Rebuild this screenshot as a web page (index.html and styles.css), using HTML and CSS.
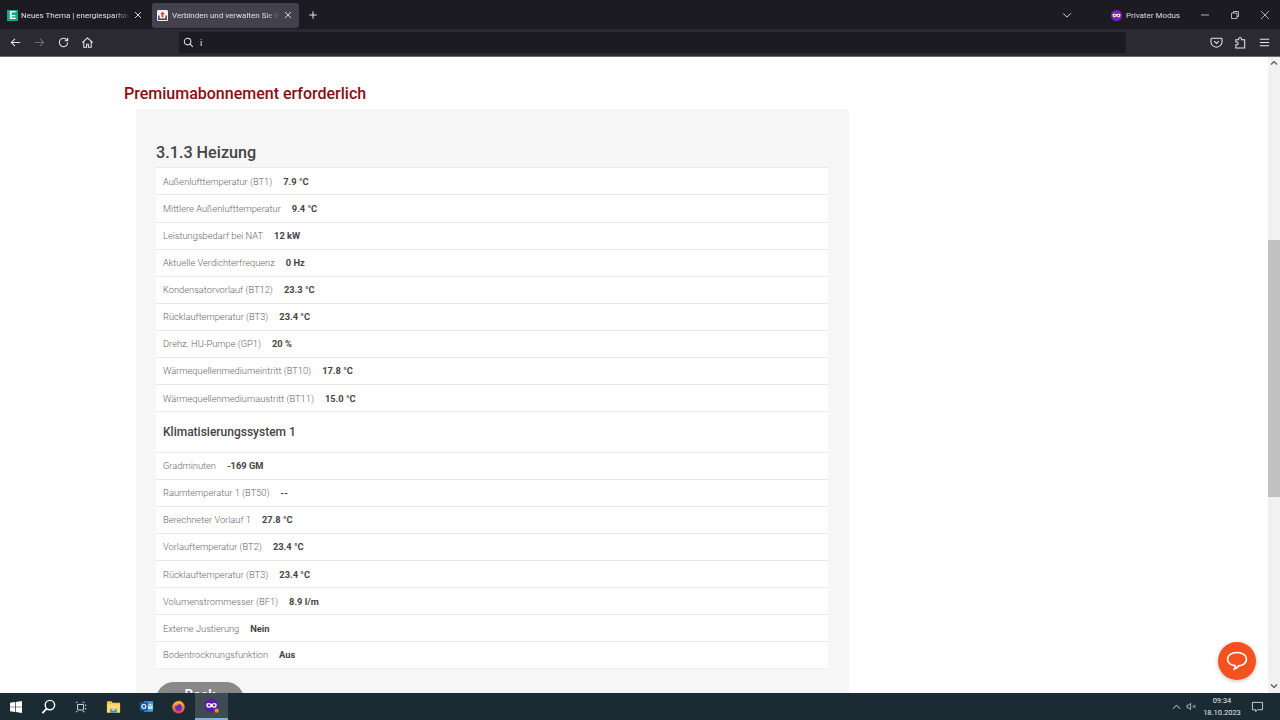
FILE: index.html
```html
<!DOCTYPE html>
<html lang="de">
<head>
<meta charset="utf-8">
<title>Verbinden und verwalten Sie Ihre Anlage</title>
<link rel="stylesheet" href="styles.css">
</head>
<body>
<div class="window">
  <header class="tabbar">
    <div class="tab">
      <span class="favicon fav-e">E</span>
      <span class="tab-title">Neues Thema | energiesparhaus.at</span>
      <svg class="tab-x" viewBox="0 0 10 10"><path d="M2 2l6 6M8 2l-6 6"/></svg>
    </div>
    <div class="tab tab-active">
      <svg class="favicon" viewBox="0 0 12 12"><rect width="12" height="12" rx="1.500" fill="#f4f1f1"/><path d="M2 6v4h8V6" fill="none" stroke="#3a3f6a" stroke-width="1.600"/><path d="M6 1.500L3.500 4.500h1.500V8h2V4.500h1.500z" fill="#d9402e"/></svg>
      <span class="tab-title">Verbinden und verwalten Sie Ihre</span>
      <svg class="tab-x" viewBox="0 0 10 10"><path d="M2 2l6 6M8 2l-6 6"/></svg>
    </div>
    <svg class="new-tab" viewBox="0 0 12 12"><path d="M6 1.500v9M1.500 6h9"/></svg>
    <div class="tabbar-right">
      <svg class="chev" viewBox="0 0 12 8"><path d="M1.500 1.500L6 6l4.500-4.500"/></svg>
      <div class="private">
        <svg class="mask" viewBox="0 0 12 12"><circle cx="6" cy="6" r="6" fill="#7a1fc4"/><path d="M1.800 4.500c1.300-.8 2.800-.6 4.200.2 1.400-.8 2.900-1 4.200-.2.400 2-.4 3.500-2 3.500-1 0-1.600-.8-2.200-.8S4.800 8 3.800 8c-1.600 0-2.400-1.500-2-3.500z" fill="#f1e6fb"/><circle cx="4" cy="6" r=".9" fill="#7a1fc4"/><circle cx="8" cy="6" r=".9" fill="#7a1fc4"/></svg>
        <span>Privater Modus</span>
      </div>
      <div class="win-controls">
        <svg viewBox="0 0 10 10"><path d="M1 5h8"/></svg>
        <svg viewBox="0 0 10 10"><path d="M1.500 3h5.500v5.500H1.500zM3.500 3V1.500h5v5H7"/></svg>
        <svg viewBox="0 0 10 10"><path d="M1 1l8 8M9 1l-8 8"/></svg>
      </div>
    </div>
  </header>

  <nav class="toolbar">
    <div class="nav-buttons">
      <svg class="tool" viewBox="0 0 14 14"><path d="M12 7H2.500M6.500 3L2.500 7l4 4"/></svg>
      <svg class="tool tool-off" viewBox="0 0 14 14"><path d="M2 7h9.500M7.500 3l4 4-4 4"/></svg>
      <svg class="tool" viewBox="0 0 14 14"><path d="M11.500 7a4.500 4.500 0 1 1-1.300-3.200L11.500 5M11.500 1.800V5H8.300"/></svg>
      <svg class="tool" viewBox="0 0 14 14"><path d="M1.500 7L7 2l5.500 5M3 6v6h3V9h2v3h3V6"/></svg>
    </div>
    <div class="urlbar">
      <svg class="url-search" viewBox="0 0 12 12"><circle cx="5" cy="5" r="3.600"/><path d="M7.700 7.700l3 3"/></svg>
      <span>i</span>
    </div>
    <div class="tool-right">
      <svg class="tool" viewBox="0 0 14 14"><path d="M2 2.500h10a1 1 0 0 1 1 1V6a6 6 0 0 1-12 0V3.500a1 1 0 0 1 1-1z"/><path d="M4.500 5.500L7 8l2.500-2.500"/></svg>
      <svg class="tool" viewBox="0 0 14 14"><path d="M5 4V3a1.500 1.500 0 0 1 3 0v1h3.500v9H2V9.500h1a1.500 1.500 0 0 0 0-3H2V4z"/></svg>
      <svg class="tool" viewBox="0 0 14 14"><path d="M2 3.500h10M2 7h10M2 10.500h10"/></svg>
    </div>
  </nav>

  <main class="viewport">
    <div class="page">
      <h2 class="notice">Premiumabonnement erforderlich</h2>
      <section class="panel">
        <h3 class="panel-title">3.1.3 Heizung</h3>
        <ul class="list">
          <li class="row"><span>Außenlufttemperatur (BT1)</span><b>7.9 °C</b></li>
          <li class="row"><span>Mittlere Außenlufttemperatur</span><b>9.4 °C</b></li>
          <li class="row"><span>Leistungsbedarf bei NAT</span><b>12 kW</b></li>
          <li class="row"><span>Aktuelle Verdichterfrequenz</span><b>0 Hz</b></li>
          <li class="row"><span>Kondensatorvorlauf (BT12)</span><b>23.3 °C</b></li>
          <li class="row"><span>Rücklauftemperatur (BT3)</span><b>23.4 °C</b></li>
          <li class="row"><span>Drehz. HU-Pumpe (GP1)</span><b>20 %</b></li>
          <li class="row"><span>Wärmequellenmediumeintritt (BT10)</span><b>17.8 °C</b></li>
          <li class="row"><span>Wärmequellenmediumaustritt (BT11)</span><b>15.0 °C</b></li>
          <li class="row row-head">Klimatisierungssystem 1</li>
          <li class="row"><span>Gradminuten</span><b>-169 GM</b></li>
          <li class="row"><span>Raumtemperatur 1 (BT50)</span><b>--</b></li>
          <li class="row"><span>Berechneter Vorlauf 1</span><b>27.8 °C</b></li>
          <li class="row"><span>Vorlauftemperatur (BT2)</span><b>23.4 °C</b></li>
          <li class="row"><span>Rücklauftemperatur (BT3)</span><b>23.4 °C</b></li>
          <li class="row"><span>Volumenstrommesser (BF1)</span><b>8.9 l/m</b></li>
          <li class="row"><span>Externe Justierung</span><b>Nein</b></li>
          <li class="row"><span>Bodentrocknungsfunktion</span><b>Aus</b></li>
        </ul>
        <button class="back">Back</button>
      </section>
    </div>
    <div class="scrollbar">
      <svg class="arrow" viewBox="0 0 8 6"><path d="M1 4.500L4 1.500l3 3"/></svg>
      <div class="track"><div class="thumb"></div></div>
      <svg class="arrow" viewBox="0 0 8 6"><path d="M1 1.500l3 3 3-3"/></svg>
    </div>
    <button class="chat" aria-label="Chat">
      <svg viewBox="0 0 24 24"><path d="M12 3.500c5.500 0 9.500 2.900 9.500 6.700s-3.600 6.500-7.700 6.700c-1.300 1.400-2.500 2.300-4.300 3 .5-1.100.7-2.100.6-3.200-3.800-.6-7.600-3-7.600-6.500 0-3.800 4-6.700 9.500-6.700z"/></svg>
    </button>
  </main>

  <footer class="taskbar">
    <div class="task-left">
      <span class="task-slot task-start"><svg class="ico-16" viewBox="0 0 12 12"><path fill="#fff" d="M0 1.700l5-.7v4.700H0zM5.700.9L12 0v5.700H5.700zM0 6.300h5V11l-5-.7zM5.700 6.300H12V12l-6.300-.9z"/></svg></span>
      <span class="task-slot"><svg class="ico-18" viewBox="0 0 16 16"><circle cx="9.500" cy="6.500" r="5" fill="none" stroke="#fff" stroke-width="1.500"/><path d="M6 10.200L1.500 15" stroke="#fff" stroke-width="1.800"/></svg></span>
      <span class="task-slot"><svg class="ico-16" viewBox="0 0 14 14"><path d="M1 1.500h2M9 1.500h2M3 4h7v6.500H3zM1 12.500h2M9 12.500h2M12.500 4v2M12.500 8v2" fill="none" stroke="#dfe3e6" stroke-width="1.100"/></svg></span>
      <span class="task-slot"><svg class="ico-18" viewBox="0 0 16 16"><path d="M1 2.500h5l1.200 1.500H15v10.500H1z" fill="#f3c63f"/><path d="M1 5.500h14v9H1z" fill="#fbd96b"/><path d="M4.500 10.500h7v4h-7z" fill="#3b87c4"/><path d="M6 10.500h4v2H6z" fill="#a9d3ee"/></svg></span>
      <span class="task-slot"><svg class="ico-18" viewBox="0 0 16 16"><rect x="5" y="2.500" width="10" height="11" rx="1" fill="#3ca0e3"/><path d="M9 5.500h5.500v5H9z" fill="#d7ecfa"/><path d="M9 5.500l2.800 2.500 2.700-2.500" fill="none" stroke="#1b6fb5" stroke-width=".8"/><rect x="1" y="3.500" width="8.500" height="9" rx="1" fill="#0f5fa8"/><circle cx="5.200" cy="8" r="2.100" fill="none" stroke="#fff" stroke-width="1.200"/></svg></span>
      <span class="task-slot"><svg class="ico-18" viewBox="0 0 16 16"><defs><linearGradient id="fx" x1="0" y1="0" x2="0" y2="1"><stop offset="0" stop-color="#ffbd33"/><stop offset="1" stop-color="#e8384f"/></linearGradient></defs><circle cx="8" cy="8.800" r="6.600" fill="url(#fx)"/><path d="M8.500 1c2.800 1.500 4.500 3.500 5 6.500L11 5z" fill="#ffa42e"/><circle cx="8" cy="9" r="3.600" fill="#5b2dbb"/><path d="M4 7.500c1-2 3-2.700 4.500-2.200L7 7z" fill="#ff8a2e"/></svg></span>
      <span class="task-slot task-current"><svg class="ico-18" viewBox="0 0 16 16"><circle cx="8" cy="8" r="7.500" fill="#5c1d9c"/><path d="M2.500 6c1.800-1.200 3.800-.8 5.500.4C9.700 5.200 11.700 4.800 13.500 6c.4 2.700-.6 4.500-2.600 4.500-1.300 0-2.100-1-2.900-1s-1.600 1-2.900 1C3.100 10.500 2.100 8.700 2.500 6z" fill="#f1e6fb"/><circle cx="5.300" cy="7.800" r="1.200" fill="#5c1d9c"/><circle cx="10.700" cy="7.800" r="1.200" fill="#5c1d9c"/><circle cx="13.500" cy="13.500" r="2.300" fill="#f08a2c"/></svg></span>
    </div>
    <div class="task-right">
      <svg class="tray-chev" viewBox="0 0 10 6"><path d="M1 5l4-4 4 4"/></svg>
      <svg class="tray-sound" viewBox="0 0 12 10"><path d="M1 3.500h1.800L5 1.500v7L2.800 6.500H1zM7.500 3.500l3 3M10.500 3.500l-3 3"/></svg>
      <div class="clock"><span>09:34</span><span>18.10.2023</span></div>
      <svg class="tray-note" viewBox="0 0 14 13"><path d="M1.500 1.500h11v8H7l-2 2v-2H1.500z"/></svg>
    </div>
  </footer>
</div>
</body>
</html>
```
FILE: styles.css
```css
* { box-sizing: border-box; }
html, body { margin: 0; height: 100%; overflow: hidden; }
body { font-family: Roboto, "Liberation Sans", sans-serif; }
svg { display: block; flex: none; }

.window { width: 1280px; height: 720px; display: flex; flex-direction: column; background: #fff; }

/* Tab strip */
.tabbar {
  height: 29px; flex: none; display: flex; align-items: center;
  background: #1c1b22; color: #e0e0e4; padding: 1px 0 0 1px; font-size: 8px;
}
.tab {
  width: 147px; height: 25px; margin-right: 4px; display: flex; align-items: center;
  padding: 0 6px 0 5px; border-radius: 3px;
}
.tab:first-child { padding: 0 5px 0 6px; }
.tab:first-child .favicon { margin-right: 3px; }
.tab-active { background: #42414d; }
.favicon { width: 11px; height: 11px; flex: none; margin-right: 4px; }
.fav-e {
  background: #17a58a; color: #fff; font: 700 10px/11px "Liberation Sans", sans-serif; text-align: center;
}
.tab-title {
  flex: 1; min-width: 0; white-space: nowrap; overflow: hidden;
  -webkit-mask-image: linear-gradient(90deg, #000 86%, transparent);
  mask-image: linear-gradient(90deg, #000 86%, transparent);
}
.tab-x { width: 10px; height: 10px; margin-left: 3px; fill: none; stroke: #d5d5da; stroke-width: 1; }
.new-tab { width: 10px; height: 10px; margin-left: 5px; fill: none; stroke: #e8e8ea; stroke-width: 1.200; }
.tabbar-right { margin-left: auto; display: flex; align-items: center; }
.chev { width: 10px; height: 7px; margin-right: 39px; fill: none; stroke: #d5d5da; stroke-width: 1.200; }
.private { display: flex; align-items: center; gap: 4px; color: #d8d8dc; font-size: 8px; margin-right: 20px; }
.mask { width: 11px; height: 11px; }
.win-controls { display: flex; align-items: center; gap: 20px; padding-right: 10px; }
.win-controls svg { width: 10px; height: 10px; fill: none; stroke: #d5d5da; stroke-width: .8; }

/* Toolbar */
.toolbar {
  height: 28px; flex: none; display: flex; align-items: center;
  background: #2b2a33; border-bottom: 1px solid #6a6a70; padding: 0 9px;
}
.tool { width: 13px; height: 13px; fill: none; stroke: #e6e6ea; stroke-width: 1.100; }
.tool-off { stroke: #6c6b73; }
.nav-buttons { display: flex; gap: 11px; }
.urlbar {
  width: 947px; height: 21px; margin-left: 85px; background: #1c1b22; border-radius: 2px;
  display: flex; align-items: center; padding-left: 4px; color: #e8e8ea; font-size: 9px; gap: 6px;
}
.url-search { width: 11px; height: 11px; fill: none; stroke: #e6e6ea; stroke-width: 1.100; }
.tool-right { margin-left: auto; display: flex; gap: 11px; }

/* Page */
.viewport { flex: 1; min-height: 0; display: flex; position: relative; overflow: hidden; background: #fff; }
.page { flex: 1; min-width: 0; padding: 27px 0 0 124px; }
.notice { margin: 0 0 6px; color: #8b0d14; font-size: 16px; line-height: 19px; font-weight: 500; }
.panel { width: 713px; margin-left: 12px; background: #f6f6f6; padding: 33px 21px 0 20px; }
.panel-title { margin: 0 0 3.400px; color: #444; font-size: 16.200px; line-height: 22px; font-weight: 500; }
.list { list-style: none; margin: 0; padding: 0; background: #fff; border-radius: 3px; }
.row {
  height: 27.090px; display: flex; align-items: center; gap: 11px; padding: 0 7px;
  border-top: 1px solid #e9e9e9; font-size: 9.300px; color: #666; font-weight: 300;
}
.row:last-child { border-bottom: 1px solid #eeeeee; height: 27.400px; }
.row b { font-weight: 700; color: #444; font-size: 9.300px; }
.row-head { height: 40.600px; font-size: 12px; font-weight: 500; color: #444; }
.back {
  display: block; width: 88px; height: 36px; margin: 13.200px 0 0; padding: 0 0 10px; border: 0; border-radius: 18px;
  background: #888; color: #fff; font: 500 14px Roboto, sans-serif;
}

.scrollbar { width: 12px; flex: none; display: flex; flex-direction: column; background: #f1f1f1; }
.arrow { width: 8px; height: 6px; margin: 3px auto 4px; fill: none; stroke: #555; stroke-width: 1.200; }
.track { flex: 1; padding-top: 170px; }
.thumb { height: 257px; background: #c1c1c1; }

.chat {
  position: absolute; right: 24px; bottom: 13px; width: 38px; height: 38px; border: 0; padding: 0;
  border-radius: 50%; background: #f4511e; display: flex; align-items: center; justify-content: center;
  box-shadow: 0 1px 4px rgba(0,0,0,.25);
}
.chat svg { width: 24px; height: 24px; fill: none; stroke: #fff; stroke-width: 1.700; }

/* Taskbar */
.taskbar {
  height: 27px; flex: none; display: flex; align-items: stretch; justify-content: space-between;
  background: #1b2b33; position: relative;
}
.task-left { display: flex; align-items: stretch; }
.task-slot { width: 32.600px; display: flex; align-items: center; justify-content: center; }
.task-start { width: 32px; }
.task-current { background: #3d4b53; border-bottom: 2px solid #7fb3d8; }
.ico-16 { width: 12px; height: 12px; }
.ico-18 { width: 15px; height: 15px; }
.task-right { display: flex; align-items: center; color: #e6e9eb; font-size: 7.500px; padding-right: 16px; }
.tray-chev { width: 9px; height: 6px; margin-right: 5px; fill: none; stroke: #e6e9eb; stroke-width: 1; }
.tray-sound { width: 11px; height: 9px; margin-right: 7.500px; fill: none; stroke: #e6e9eb; stroke-width: .8; }
.clock { display: flex; flex-direction: column; align-items: center; line-height: 12px; margin-right: 11px; width: 36px; }
.tray-note { width: 13px; height: 12px; fill: none; stroke: #e6e9eb; stroke-width: .9; }
```
